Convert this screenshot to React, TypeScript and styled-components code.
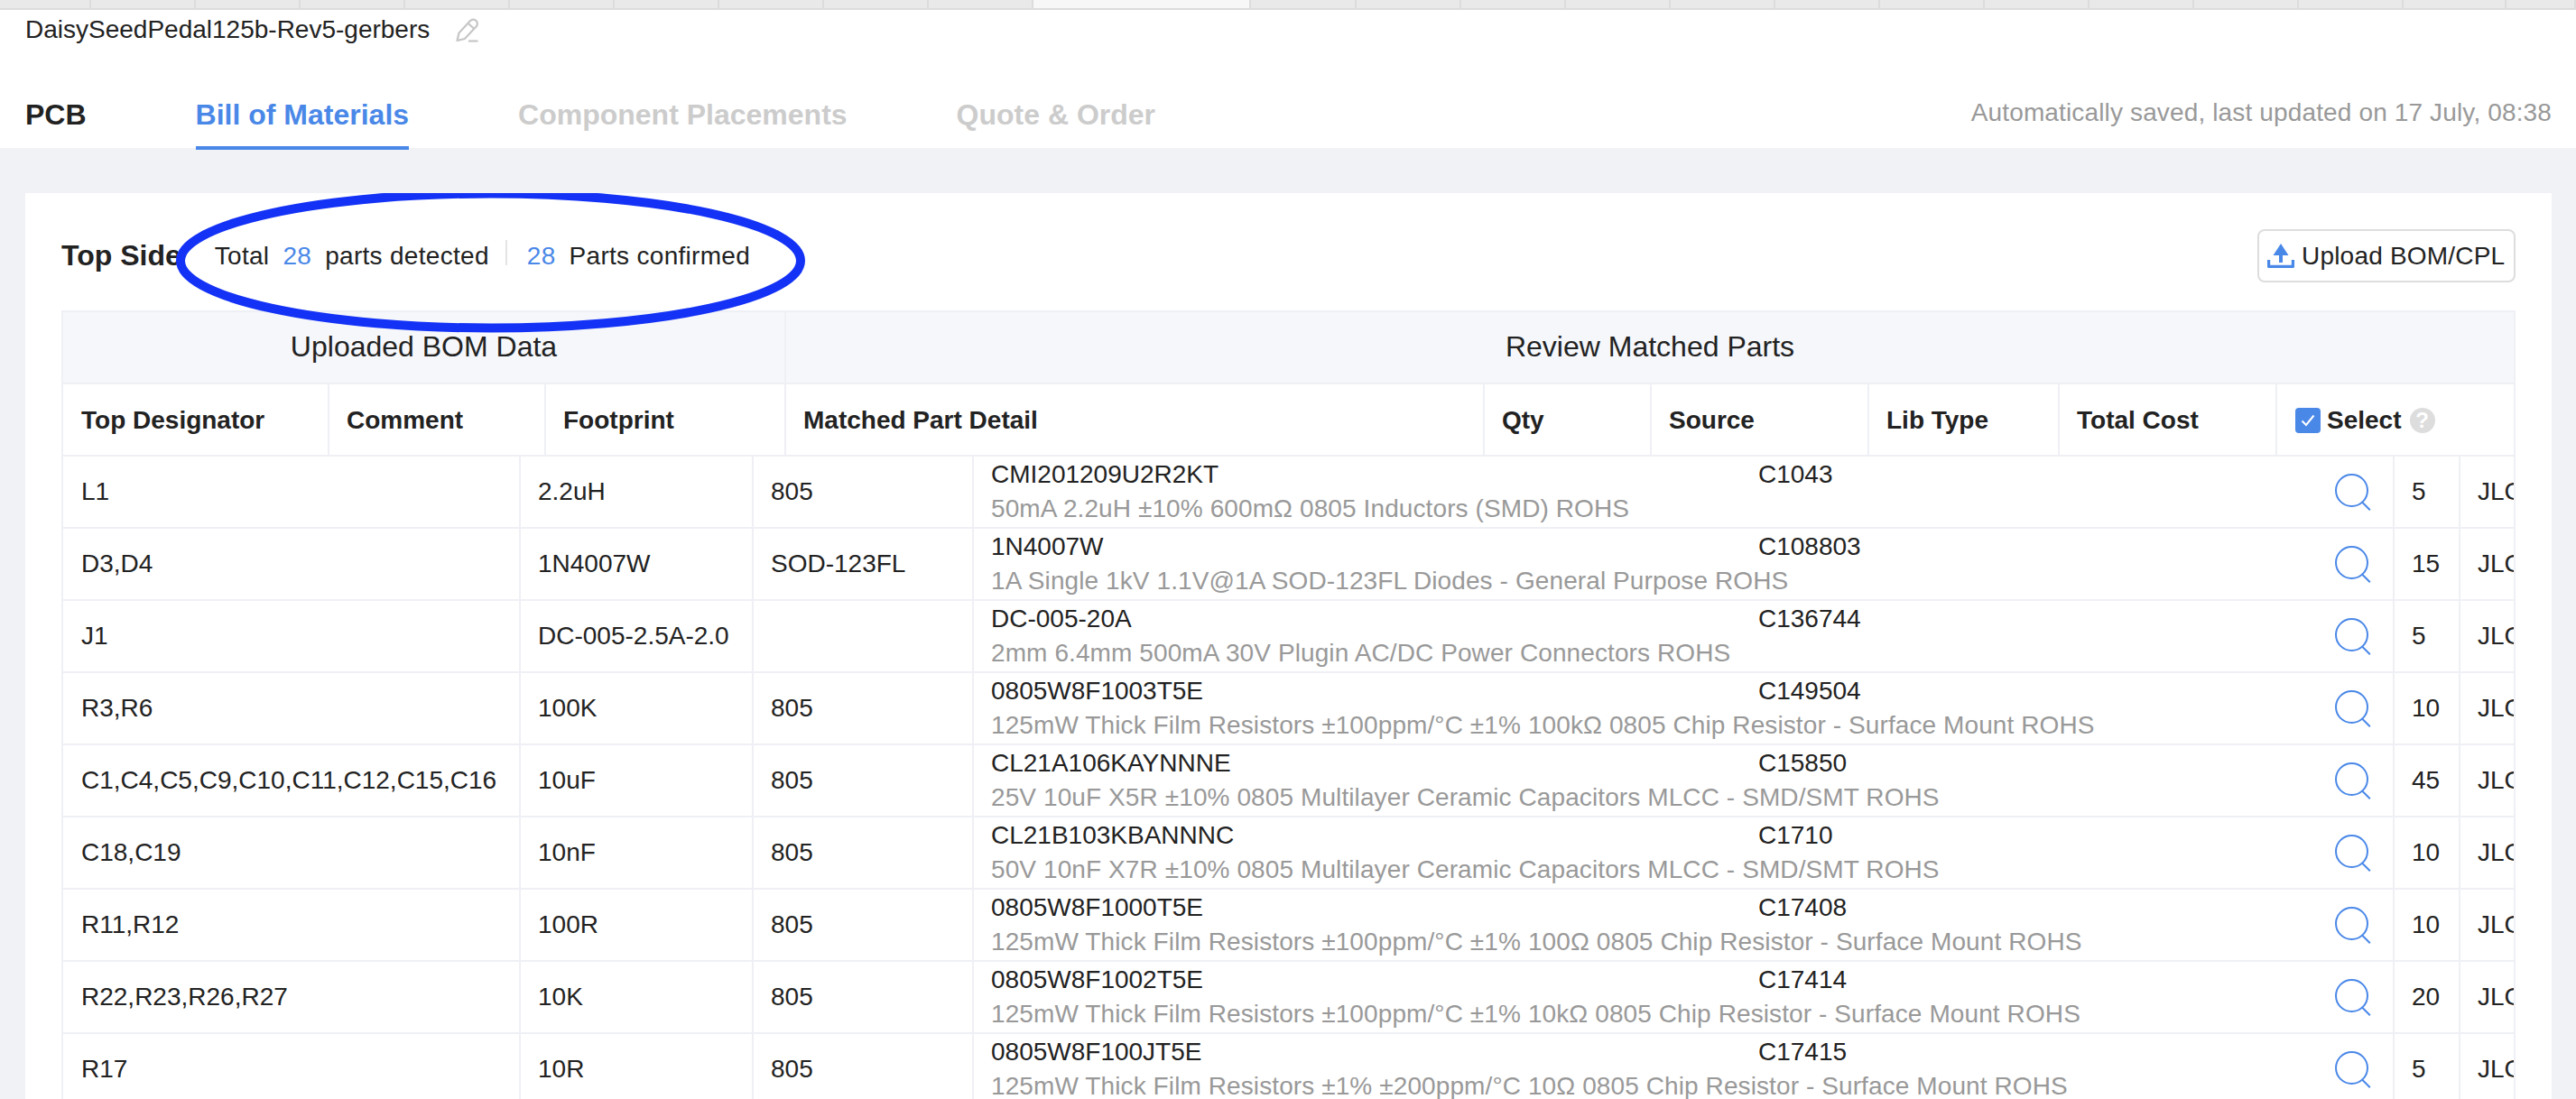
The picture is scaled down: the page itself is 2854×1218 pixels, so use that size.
import { createGlobalStyle, styled } from "styled-components";

const BLUE = "#4a88e8";
const LINE = "#eff0f5";
const INK = "#222222";

const GlobalStyle = createGlobalStyle`
  html, body {
    margin: 0;
    padding: 0;
    height: 100%;
    overflow: hidden;
    background: #f0f2f6;
  }
  body {
    font-family: "Liberation Sans", Arial, sans-serif;
    font-size: 28px;
    color: ${INK};
  }
`;

const Page = styled.div`
  height: 1218px;
  display: flex;
  flex-direction: column;
  overflow: hidden;
`;

const Strip = styled.div`
  display: flex;
  height: 11px;
  flex: none;
  background: #e9e9e9;
  border-bottom: 2px solid #dcdcdc;
  box-sizing: border-box;
`;

const StripTab = styled.div<{ $w: number; $active?: boolean }>`
  flex: none;
  width: ${(p) => p.$w}px;
  box-sizing: border-box;
  border-right: 2px solid #dcdcdc;
  background: ${(p) => (p.$active ? "#f7f7f7" : "#e9e9e9")};
`;

const Header = styled.header`
  position: relative;
  flex: none;
  height: 153px;
  background: #fff;
  display: flex;
  flex-direction: column;
`;

const TitleRow = styled.div`
  height: 44px;
  padding-left: 28px;
  display: flex;
  align-items: center;
  gap: 29px;
`;

const Title = styled.span`
  font-size: 28px;
  white-space: nowrap;
`;

const NavRow = styled.div`
  flex: 1;
  display: flex;
  align-items: flex-end;
  justify-content: space-between;
  padding: 0 27px 0 28px;
  margin-bottom: -2px;
`;

const Nav = styled.nav`
  display: flex;
  gap: 121px;
`;

const Tab = styled.span<{ $state: "done" | "active" | "todo" }>`
  font-size: 32px;
  font-weight: 700;
  line-height: 70px;
  white-space: nowrap;
  border-bottom: 4px solid ${(p) => (p.$state === "active" ? BLUE : "transparent")};
  color: ${(p) =>
    p.$state === "active" ? BLUE : p.$state === "todo" ? "#cccccc" : INK};
`;

const Saved = styled.span`
  color: #999;
  font-size: 28px;
  line-height: 38px;
  letter-spacing: 0.14px;
  margin-bottom: 22px;
  white-space: nowrap;
`;

const Body = styled.main`
  flex: 1;
  min-height: 0;
  padding: 50px 27px 0 28px;
`;

const Card = styled.section`
  position: relative;
  background: #fff;
  padding: 40px 40px 0;
  height: 100%;
  box-sizing: border-box;
  overflow: hidden;
`;

const Toolbar = styled.div`
  display: flex;
  align-items: center;
  height: 59px;
  margin-bottom: 31px;
`;

const SideLabel = styled.h2`
  margin: 0 37px 0 0;
  font-size: 32px;
  font-weight: 700;
  white-space: nowrap;
`;

const Stat = styled.span`
  display: inline-flex;
  gap: 15px;
  letter-spacing: 0.3px;
  white-space: nowrap;
`;

const Count = styled.span`
  color: ${BLUE};
`;

const StatDivider = styled.span`
  width: 2px;
  height: 28px;
  background: #e4e4e4;
  margin: -8px 22px 0 18px;
`;

const UploadButton = styled.button`
  margin-left: auto;
  width: 286px;
  height: 59px;
  box-sizing: border-box;
  display: flex;
  align-items: center;
  gap: 8px;
  padding: 0 0 0 9px;
  border: 2px solid #dddddd;
  border-radius: 8px;
  background: #fff;
  font: inherit;
  letter-spacing: 0.2px;
  color: ${INK};
  white-space: nowrap;
`;

const Annotation = styled.svg`
  position: absolute;
  left: 167px;
  top: -5px;
  pointer-events: none;
`;

const TableBox = styled.div`
  border-right: 2px solid ${LINE};
  overflow: hidden;
`;

const Row = styled.div<{ $cols: string; $h?: number }>`
  display: grid;
  grid-template-columns: ${(p) => p.$cols};
  height: ${(p) => p.$h ?? 80}px;
  box-sizing: border-box;
  border-top: 2px solid ${LINE};
`;

const GroupCell = styled.div`
  background: #f5f7fb;
  border-left: 2px solid ${LINE};
  display: flex;
  align-items: center;
  justify-content: center;
  padding-bottom: 2px;
  font-size: 32px;
`;

const HeadCell = styled.div`
  border-left: 2px solid ${LINE};
  padding: 2px 0 0 19px;
  display: flex;
  align-items: center;
  font-weight: 700;
  white-space: nowrap;

  &:first-child {
    padding-left: 20px;
  }
`;

const Cell = styled.div`
  border-left: 2px solid ${LINE};
  padding-left: 19px;
  display: flex;
  align-items: center;
  white-space: nowrap;
  overflow: hidden;

  &:first-child {
    padding-left: 20px;
  }
`;

const PartCell = styled(Cell)`
  justify-content: space-between;
  padding-right: 24px;
  overflow: visible;
`;

const PartInfo = styled.div`
  display: grid;
  grid-template-columns: 850px auto;
  line-height: 38px;
`;

const PartDesc = styled.div`
  grid-column: 1 / span 2;
  color: #999;
  letter-spacing: 0.1px;
`;

const CheckBox = styled.span`
  width: 28px;
  height: 28px;
  border-radius: 4px;
  background: ${BLUE};
  display: flex;
  align-items: center;
  justify-content: center;
  margin: 0 7px 0 1px;
`;

const HelpDot = styled.span`
  width: 28px;
  height: 28px;
  border-radius: 50%;
  background: #dddddd;
  color: #fff;
  font-size: 24px;
  display: flex;
  align-items: center;
  justify-content: center;
  margin-left: 9px;
`;

const tabWidths = [101, 116, 116, 116, 116, 116, 116, 116, 116, 116, 241, 117, 116, 116, 116, 116, 116, 116, 116, 116, 116, 116, 114, 77];

const headCols = "295px 240px 266px 774px 185px 241px 211px 241px 1fr";
const bodyCols = "507px 258px 244px 1574px 73px 1fr";

const headers = ["Top Designator", "Comment", "Footprint", "Matched Part Detail", "Qty", "Source", "Lib Type", "Total Cost"];

const parts = [
  ["L1", "2.2uH", "805", "CMI201209U2R2KT", "C1043", "50mA 2.2uH ±10% 600mΩ 0805 Inductors (SMD) ROHS", "5"],
  ["D3,D4", "1N4007W", "SOD-123FL", "1N4007W", "C108803", "1A Single 1kV 1.1V@1A SOD-123FL Diodes - General Purpose ROHS", "15"],
  ["J1", "DC-005-2.5A-2.0", "", "DC-005-20A", "C136744", "2mm 6.4mm 500mA 30V Plugin AC/DC Power Connectors ROHS", "5"],
  ["R3,R6", "100K", "805", "0805W8F1003T5E", "C149504", "125mW Thick Film Resistors ±100ppm/°C ±1% 100kΩ 0805 Chip Resistor - Surface Mount ROHS", "10"],
  ["C1,C4,C5,C9,C10,C11,C12,C15,C16", "10uF", "805", "CL21A106KAYNNNE", "C15850", "25V 10uF X5R ±10% 0805 Multilayer Ceramic Capacitors MLCC - SMD/SMT ROHS", "45"],
  ["C18,C19", "10nF", "805", "CL21B103KBANNNC", "C1710", "50V 10nF X7R ±10% 0805 Multilayer Ceramic Capacitors MLCC - SMD/SMT ROHS", "10"],
  ["R11,R12", "100R", "805", "0805W8F1000T5E", "C17408", "125mW Thick Film Resistors ±100ppm/°C ±1% 100Ω 0805 Chip Resistor - Surface Mount ROHS", "10"],
  ["R22,R23,R26,R27", "10K", "805", "0805W8F1002T5E", "C17414", "125mW Thick Film Resistors ±100ppm/°C ±1% 10kΩ 0805 Chip Resistor - Surface Mount ROHS", "20"],
  ["R17", "10R", "805", "0805W8F100JT5E", "C17415", "125mW Thick Film Resistors ±1% ±200ppm/°C 10Ω 0805 Chip Resistor - Surface Mount ROHS", "5"],
];

function PencilIcon() {
  return (
    <svg width="25" height="27" viewBox="0 0 25 27" fill="none" stroke="#c6c6c6" strokeWidth="2.2" strokeLinejoin="round">
      <path d="M1.5 25 L3.5 16.5 L15.5 3.5 C17.5 1.3 20.5 1 22.5 3 C24.5 5 24.3 7.8 22.3 9.8 L9.8 23 Z" />
      <path d="M13.5 5.8 L20.5 12" />
      <path d="M14 25.5 H24.5" />
    </svg>
  );
}

function UploadIcon() {
  return (
    <svg width="30" height="27" viewBox="0 0 30 27" fill={BLUE}>
      <path d="M15 0 L23.5 13 H17 V21 H13 V13 H6.5 Z" />
      <path d="M0 18 H3.2 V23.8 H26.8 V18 H30 V25.5 Q30 27 28.5 27 H1.5 Q0 27 0 25.5 Z" />
    </svg>
  );
}

function SearchIcon() {
  return (
    <svg width="40" height="41" viewBox="0 0 40 41" fill="none" stroke={BLUE} strokeWidth="2">
      <circle cx="18.5" cy="18.5" r="17.5" />
      <path d="M29.5 31 L38.8 40.2" />
    </svg>
  );
}

export default function App() {
  return (
    <Page>
      <GlobalStyle />
      <Strip>
        {tabWidths.map((w, i) => (
          <StripTab key={i} $w={w} $active={i === 10} />
        ))}
      </Strip>
      <Header>
        <TitleRow>
          <Title>DaisySeedPedal125b-Rev5-gerbers</Title>
          <PencilIcon />
        </TitleRow>
        <NavRow>
          <Nav>
            <Tab $state="done">PCB</Tab>
            <Tab $state="active">Bill of Materials</Tab>
            <Tab $state="todo">Component Placements</Tab>
            <Tab $state="todo">Quote &amp; Order</Tab>
          </Nav>
          <Saved>Automatically saved, last updated on 17 July, 08:38</Saved>
        </NavRow>
      </Header>
      <Body>
        <Card>
          <Toolbar>
            <SideLabel>Top Side</SideLabel>
            <Stat>
              Total <Count>28</Count> parts detected
            </Stat>
            <StatDivider />
            <Stat>
              <Count>28</Count> Parts confirmed
            </Stat>
            <UploadButton type="button">
              <UploadIcon />
              Upload BOM/CPL
            </UploadButton>
          </Toolbar>
          <TableBox>
            <Row $cols="801px 1fr">
              <GroupCell>Uploaded BOM Data</GroupCell>
              <GroupCell>Review Matched Parts</GroupCell>
            </Row>
            <Row $cols={headCols}>
              {headers.map((h) => (
                <HeadCell key={h}>{h}</HeadCell>
              ))}
              <HeadCell>
                <CheckBox>
                  <svg width="16" height="14" viewBox="0 0 16 14" fill="none" stroke="#fff" strokeWidth="2">
                    <path d="M1.5 7.5 L6 12 L14.5 1.5" />
                  </svg>
                </CheckBox>
                Select
                <HelpDot>?</HelpDot>
              </HeadCell>
            </Row>
            {parts.map(([des, comment, footprint, name, code, desc, qty]) => (
              <Row key={des} $cols={bodyCols}>
                <Cell>{des}</Cell>
                <Cell>{comment}</Cell>
                <Cell>{footprint}</Cell>
                <PartCell>
                  <PartInfo>
                    <span>{name}</span>
                    <span>{code}</span>
                    <PartDesc>{desc}</PartDesc>
                  </PartInfo>
                  <SearchIcon />
                </PartCell>
                <Cell>{qty}</Cell>
                <Cell>JLCPCB</Cell>
              </Row>
            ))}
          </TableBox>
          <Annotation width="697" height="160" viewBox="0 0 697 160" fill="none">
            <ellipse cx="348.5" cy="80" rx="343.5" ry="74.5" stroke="#1432f5" strokeWidth="10" />
          </Annotation>
        </Card>
      </Body>
    </Page>
  );
}
